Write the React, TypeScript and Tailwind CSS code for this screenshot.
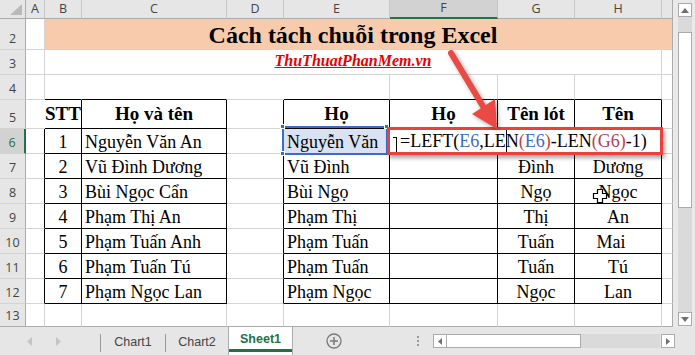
import React from 'react';

const people = [
  ['1', 'Nguyễn Văn An'],
  ['2', 'Vũ Đình Dương'],
  ['3', 'Bùi Ngọc Cẩn'],
  ['4', 'Phạm Thị An'],
  ['5', 'Phạm Tuấn Anh'],
  ['6', 'Phạm Tuấn Tú'],
  ['7', 'Phạm Ngọc Lan'],
];

const parts = [
  ['Nguyễn Văn', '', ''],
  ['Vũ Đình', 'Đình', 'Dương'],
  ['Bùi Ngọ', 'Ngọ', 'Ngọc'],
  ['Phạm Thị', 'Thị', 'An'],
  ['Phạm Tuấn', 'Tuấn', 'Mai'],
  ['Phạm Tuấn', 'Tuấn', 'Tú'],
  ['Phạm Ngọc', 'Ngọc', 'Lan'],
];

const cell = "border-r border-b flex overflow-hidden whitespace-nowrap font-['Liberation_Serif','Times_New_Roman',serif] leading-[22px] text-black";

const RowHead = ({ n, last }: { n: number; last?: boolean }) => {
  const active = n === 6;
  return (
    <div
      className={`flex items-end justify-center pb-[2px] border-b text-[12.5px] leading-[16px] font-['Open_Sans',sans-serif] ${
        active
          ? 'bg-[#d2d2d2] text-[#217346] border-r-2 border-r-[#217346]'
          : 'bg-[#e6e6e6] text-[#444] border-r border-r-[#ababab]'
      } ${last ? 'border-b-[#ababab]' : 'border-b-[#d4d4d4]'}`}
    >
      {n}
    </div>
  );
};

const ColHead = ({ l }: { l: string }) => (
  <div
    className={`flex items-center justify-center border-r text-[12.5px] font-['Open_Sans',sans-serif] text-[#444] ${
      l === 'F'
        ? 'bg-[#d2d2d2] border-b-2 border-b-[#217346] border-r-[#c6c6c6]'
        : l === 'I'
        ? 'bg-[#e6e6e6] border-b border-b-[#ababab] border-r-[#ababab]'
        : 'bg-[#e6e6e6] border-b border-b-[#ababab] border-r-[#c6c6c6]'
    }`}
  >
    {l === 'I' ? '' : l}
  </div>
);

const Sheet = () => (
  <div className="grid grid-cols-[26px_19px_37px_145px_57px_106px_108px_77px_87px_11px] grid-rows-[19px_31px_25px_25px_29px_25px_25px_25px_25px_25px_25px_25px_23px] bg-white">
    {/* column headers */}
    <div className="relative bg-[#e6e6e6] border-r border-b border-r-[#ababab] border-b-[#ababab]">
      <div className="absolute right-[3px] bottom-[3px] w-0 h-0 border-l-[12px] border-l-transparent border-b-[11px] border-b-[#b9b9b9]" />
    </div>
    {['A', 'B', 'C', 'D', 'E', 'F', 'G', 'H', 'I'].map((l) => (
      <ColHead key={l} l={l} />
    ))}

    {/* row 2 – title */}
    <RowHead n={2} />
    <div className="border-r border-b border-r-[#d4d4d4] border-b-[#d4d4d4]" />
    <div className="col-span-8 flex items-end justify-center pr-[11px] bg-[#f8cbad] border-r border-b border-r-[#ababab] border-b-[#d4d4d4]">
      <span className="font-['Liberation_Serif','Times_New_Roman',serif] font-bold text-[24px] leading-[28px] text-black">
        Cách tách chuỗi trong Excel
      </span>
    </div>

    {/* row 3 – link */}
    <RowHead n={3} />
    <div className="border-r border-b border-r-[#d4d4d4] border-b-[#d4d4d4]" />
    <div className="col-span-7 flex items-end justify-center pb-[3px] border-r border-b border-r-[#d4d4d4] border-b-[#d4d4d4]">
      <span className="font-['Liberation_Serif','Times_New_Roman',serif] font-bold italic text-[16px] leading-[20px] text-[#e60000] underline decoration-[#e60000]">
        ThuThuatPhanMem.vn
      </span>
    </div>
    <div className="border-r border-b border-r-[#ababab] border-b-[#d4d4d4]" />

    {/* row 4 */}
    <RowHead n={4} />
    <div className="border-r border-b border-r-[#d4d4d4] border-b-[#d4d4d4]" />
    <div className="border-r border-b border-r-white border-b-black" />
    <div className="border-r border-b border-r-white border-b-black" />
    <div className="border-r border-b border-r-white border-b-[#d4d4d4]" />
    <div className="border-r border-b border-r-[#d4d4d4] border-b-black" />
    <div className="border-r border-b border-r-[#d4d4d4] border-b-black" />
    <div className="border-r border-b border-r-[#d4d4d4] border-b-black" />
    <div className="border-r border-b border-r-[#d4d4d4] border-b-black" />
    <div className="border-r border-b border-r-[#ababab] border-b-[#d4d4d4]" />

    {/* rows 5–12 – the two tables */}
    {[5, 6, 7, 8, 9, 10, 11, 12].map((r) => {
      const head = r === 5;
      const i = r - 6;
      const txt = head ? 'items-center font-bold text-[19px]' : 'items-end text-[18px]';
      return (
        <React.Fragment key={r}>
          <RowHead n={r} />
          <div className={`border-r border-b border-b-[#d4d4d4] ${head ? 'border-r-white' : 'border-r-black'}`} />
          <div className={`${cell} ${txt} justify-center border-r-black border-b-black`}>
            {head ? 'STT' : people[i][0]}
          </div>
          <div className={`${cell} ${txt} ${head ? 'justify-center' : 'pl-[3px]'} border-r-black border-b-black`}>
            {head ? 'Họ và tên' : people[i][1]}
          </div>
          <div className="border-r border-b border-r-black border-b-[#d4d4d4]" />
          <div
            className={`${cell} ${txt} ${head ? 'justify-center' : 'pl-[3px]'} ${
              r === 6 ? 'bg-[#d9e2f3]' : ''
            } border-r-black border-b-black`}
          >
            {head ? 'Họ' : parts[i][0]}
          </div>
          <div className={`${cell} ${txt} justify-center border-r-black border-b-black`}>{head ? 'Họ' : ''}</div>
          <div className={`${cell} ${txt} justify-center border-r-black border-b-black`}>
            {head ? 'Tên lót' : parts[i][1]}
          </div>
          <div
            className={`${cell} ${txt} justify-center ${r === 10 ? 'pr-[14px]' : ''} border-r-black border-b-black`}
          >
            {head ? 'Tên' : parts[i][2]}
          </div>
          <div className="border-r border-b border-r-[#ababab] border-b-[#d4d4d4]" />
        </React.Fragment>
      );
    })}

    {/* row 13 */}
    <RowHead n={13} last />
    <div className="border-r border-b border-r-[#d4d4d4] border-b-[#ababab]" />
    <div className="border-r border-b border-r-[#d4d4d4] border-b-[#ababab]" />
    <div className="border-r border-b border-r-[#d4d4d4] border-b-[#ababab]" />
    <div className="border-r border-b border-r-[#d4d4d4] border-b-[#ababab]" />
    <div className="border-r border-b border-r-[#d4d4d4] border-b-[#ababab]" />
    <div className="border-r border-b border-r-[#d4d4d4] border-b-[#ababab]" />
    <div className="border-r border-b border-r-[#d4d4d4] border-b-[#ababab]" />
    <div className="border-r border-b border-r-[#d4d4d4] border-b-[#ababab]" />
    <div className="border-r border-b border-r-[#ababab] border-b-[#ababab]" />
  </div>
);

const VScroll = () => (
  <div className="w-[22px] flex flex-col pl-[5px] pr-[3px] pt-[3px] pb-px bg-[#e9e9e9]">
    <div className="h-[14px] bg-white border border-[#ababab] flex items-center justify-center">
      <svg width="8" height="5" viewBox="0 0 8 5">
        <polygon points="0,5 4,0 8,5" fill="#6f6f6f" />
      </svg>
    </div>
    <div className="h-[15px] bg-[#dadada]" />
    <div className="h-[176px] bg-white border border-[#ababab]" />
    <div className="flex-1 bg-[#dadada]" />
    <div className="h-[14px] bg-white border border-[#ababab] flex items-center justify-center">
      <svg width="8" height="5" viewBox="0 0 8 5">
        <polygon points="0,0 8,0 4,5" fill="#6f6f6f" />
      </svg>
    </div>
  </div>
);

const TabBar = () => (
  <div className="flex h-[28px] items-stretch bg-[#e6e6e6] font-['Liberation_Sans',Arial,sans-serif] text-[12.5px]">
    <div className="w-[100px] flex items-center">
      <svg className="ml-[27px]" width="5" height="9" viewBox="0 0 5 9">
        <polygon points="5,0 0,4.5 5,9" fill="#c4c4c4" />
      </svg>
      <svg className="ml-[24px]" width="5" height="9" viewBox="0 0 5 9">
        <polygon points="0,0 5,4.5 0,9" fill="#c4c4c4" />
      </svg>
    </div>
    <div className="w-px h-[18px] self-center mt-[4px] bg-[#9a9a9a]" />
    <div className="w-[64px] flex items-center justify-center pt-[3px] text-[#444]">Chart1</div>
    <div className="w-px h-[18px] self-center mt-[4px] bg-[#9a9a9a]" />
    <div className="w-[62px] flex items-center justify-center pt-[3px] text-[#444]">Chart2</div>
    <div className="w-[65px] flex flex-col bg-white border-l border-r border-[#ababab]">
      <div className="flex-1 flex items-center justify-center pt-[3px] font-bold text-[#217346]">Sheet1</div>
      <div className="h-[3px] mb-[3px] bg-[#217346]" />
    </div>
    <div className="ml-[33px] flex items-center">
      <svg width="16" height="16" viewBox="0 0 16 16">
        <circle cx="8" cy="8" r="7" fill="none" stroke="#7a7a7a" strokeWidth="1.3" />
        <path d="M8 4v8M4 8h8" stroke="#7a7a7a" strokeWidth="1.5" />
      </svg>
    </div>
    <div className="ml-[75px] flex flex-col justify-center gap-[2px]">
      <div className="w-[2px] h-[2px] bg-[#9a9a9a]" />
      <div className="w-[2px] h-[2px] bg-[#9a9a9a]" />
      <div className="w-[2px] h-[2px] bg-[#9a9a9a]" />
    </div>
    <div className="ml-[14px] flex items-center">
      <div className="w-[14px] h-[14px] bg-white border border-[#ababab] flex items-center justify-center">
        <svg width="4" height="7" viewBox="0 0 4 7">
          <polygon points="4,0 0,3.5 4,7" fill="#6f6f6f" />
        </svg>
      </div>
      <div className="w-[134px] h-[14px] bg-white border-t border-b border-r border-[#ababab]" />
      <div className="w-[79px] h-[14px] bg-[#dadada]" />
      <div className="ml-px w-[14px] h-[14px] bg-white border border-[#ababab] flex items-center justify-center">
        <svg width="4" height="7" viewBox="0 0 4 7">
          <polygon points="0,0 4,3.5 0,7" fill="#6f6f6f" />
        </svg>
      </div>
    </div>
  </div>
);

export default function App() {
  return (
    <div className="relative w-[695px] h-[355px] overflow-hidden bg-[#e9e9e9]">
      <div className="flex h-[327px]">
        <Sheet />
        <VScroll />
      </div>
      <TabBar />

      {/* selected cell E6 */}
      <div className="absolute left-[282px] top-[126px] w-[106px] h-[29px] border-2 border-[#3c6dc5]" />
      <div className="absolute left-[280px] top-[124px] w-[5px] h-[5px] bg-[#3c6dc5] border border-white" />
      <div className="absolute left-[280px] top-[151px] w-[5px] h-[5px] bg-[#3c6dc5] border border-white" />
      <div className="absolute left-[384px] top-[124px] w-[5px] h-[5px] bg-[#3c6dc5] border border-white" />

      {/* formula being typed */}
      <div className="absolute left-[387px] top-[127px] w-[276px] h-[28px] border-[3px] border-[#e8413e] bg-white shadow-[2px_3px_4px_rgba(0,0,0,0.35)] flex items-center pl-[10px] whitespace-nowrap font-['Liberation_Serif','Times_New_Roman',serif] text-[18px] leading-[22px] text-black">
        <div className="absolute left-[6px] top-[7px] w-px h-[15px] bg-black" />
        <div className="absolute left-[3px] top-[7px] w-[4px] h-px bg-black" />
        <span>=LEFT(</span>
        <span className="text-[#3f6cc4]">E6</span>
        <span>,LE</span>
        <span className="relative inline-block w-0 h-[22px] self-start">
          <span className="absolute left-0 top-0 w-px h-[22px] bg-black" />
        </span>
        <span>N</span>
        <span className="text-[#c8423c]">(</span>
        <span className="text-[#3f6cc4]">E6</span>
        <span className="text-[#c8423c]">)</span>
        <span>-LEN</span>
        <span className="text-[#c8423c]">(</span>
        <span className="text-[#b0405e]">G6</span>
        <span className="text-[#c8423c]">)</span>
        <span>-1)</span>
      </div>

      {/* mouse pointer */}
      <svg className="absolute left-[592px] top-[188px]" width="16" height="16" viewBox="0 0 16 16">
        <path d="M5.5 1.5h5v4h4v5h-4v4h-5v-4h-4v-5h4z" fill="white" stroke="black" strokeWidth="1.2" />
      </svg>

      {/* red arrow */}
      <svg
        className="absolute left-0 top-0 pointer-events-none drop-shadow-[2px_2px_2px_rgba(0,0,0,0.35)]"
        width="695"
        height="355"
        viewBox="0 0 695 355"
      >
        <line x1="451" y1="53" x2="484" y2="108" stroke="#ea4a43" strokeWidth="6" strokeLinecap="round" />
        <polygon points="497,129 472,114 495,99" fill="#ea4a43" />
      </svg>
    </div>
  );
}
